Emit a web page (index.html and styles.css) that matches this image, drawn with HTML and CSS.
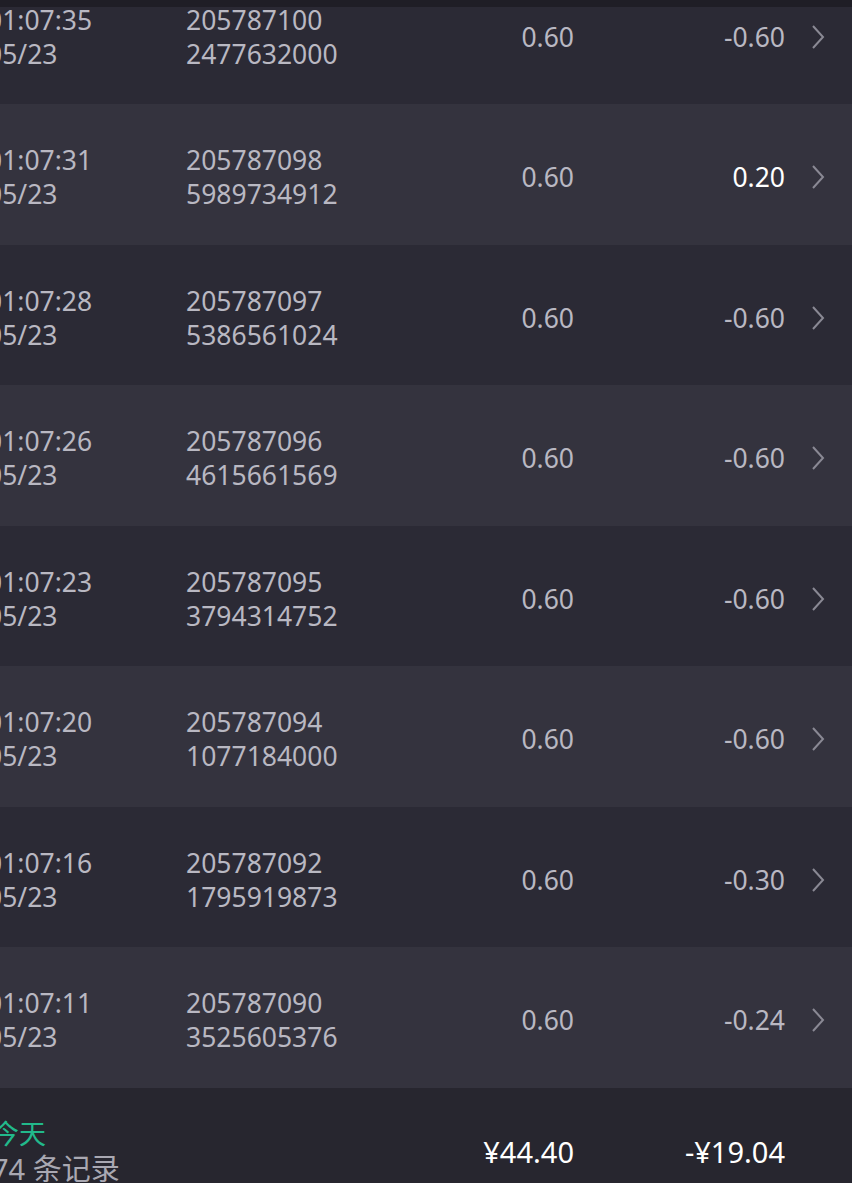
FILE: index.html
```html
<!DOCTYPE html>
<html lang="zh-CN">
<head>
    <meta charset="UTF-8">
    <title>交易记录</title>
    <meta name="viewport" content="width=device-width, initial-scale=1.0">
    <link rel="stylesheet" href="styles.css">
</head>
<body>
    <div class="topbar"></div>

    <div class="list">
        <div class="row">
            <div class="time">01:07:35<br>05/23</div>
            <div class="order">205787100<br>2477632000</div>
            <div class="amount">0.60</div>
            <div class="profit">-0.60</div>
            <div class="arrow"><svg width="14" height="26" viewBox="0 0 14 26"><polyline points="2,2 12,13 2,24" fill="none" stroke="#8a8994" stroke-width="2"/></svg></div>
        </div>
        <div class="row">
            <div class="time">01:07:31<br>05/23</div>
            <div class="order">205787098<br>5989734912</div>
            <div class="amount">0.60</div>
            <div class="profit win">0.20</div>
            <div class="arrow"><svg width="14" height="26" viewBox="0 0 14 26"><polyline points="2,2 12,13 2,24" fill="none" stroke="#8a8994" stroke-width="2"/></svg></div>
        </div>
        <div class="row">
            <div class="time">01:07:28<br>05/23</div>
            <div class="order">205787097<br>5386561024</div>
            <div class="amount">0.60</div>
            <div class="profit">-0.60</div>
            <div class="arrow"><svg width="14" height="26" viewBox="0 0 14 26"><polyline points="2,2 12,13 2,24" fill="none" stroke="#8a8994" stroke-width="2"/></svg></div>
        </div>
        <div class="row">
            <div class="time">01:07:26<br>05/23</div>
            <div class="order">205787096<br>4615661569</div>
            <div class="amount">0.60</div>
            <div class="profit">-0.60</div>
            <div class="arrow"><svg width="14" height="26" viewBox="0 0 14 26"><polyline points="2,2 12,13 2,24" fill="none" stroke="#8a8994" stroke-width="2"/></svg></div>
        </div>
        <div class="row">
            <div class="time">01:07:23<br>05/23</div>
            <div class="order">205787095<br>3794314752</div>
            <div class="amount">0.60</div>
            <div class="profit">-0.60</div>
            <div class="arrow"><svg width="14" height="26" viewBox="0 0 14 26"><polyline points="2,2 12,13 2,24" fill="none" stroke="#8a8994" stroke-width="2"/></svg></div>
        </div>
        <div class="row">
            <div class="time">01:07:20<br>05/23</div>
            <div class="order">205787094<br>1077184000</div>
            <div class="amount">0.60</div>
            <div class="profit">-0.60</div>
            <div class="arrow"><svg width="14" height="26" viewBox="0 0 14 26"><polyline points="2,2 12,13 2,24" fill="none" stroke="#8a8994" stroke-width="2"/></svg></div>
        </div>
        <div class="row">
            <div class="time">01:07:16<br>05/23</div>
            <div class="order">205787092<br>1795919873</div>
            <div class="amount">0.60</div>
            <div class="profit">-0.30</div>
            <div class="arrow"><svg width="14" height="26" viewBox="0 0 14 26"><polyline points="2,2 12,13 2,24" fill="none" stroke="#8a8994" stroke-width="2"/></svg></div>
        </div>
        <div class="row">
            <div class="time">01:07:11<br>05/23</div>
            <div class="order">205787090<br>3525605376</div>
            <div class="amount">0.60</div>
            <div class="profit">-0.24</div>
            <div class="arrow"><svg width="14" height="26" viewBox="0 0 14 26"><polyline points="2,2 12,13 2,24" fill="none" stroke="#8a8994" stroke-width="2"/></svg></div>
        </div>
    </div>

    <div class="summary">
        <div class="day">
            <div class="today">今天</div>
            <div class="count">74 条记录</div>
        </div>
        <div></div>
        <div class="total">¥44.40</div>
        <div class="total">-¥19.04</div>
        <div></div>
    </div>
</body>
</html>
```

FILE: styles.css
```css
* { box-sizing: border-box; }
body {
    margin: 0;
    height: 1183px;
    overflow: hidden;
    background: #27262f;
    font-family: "Noto Sans", "Noto Sans CJK SC", sans-serif;
    color: #b9b8c2;
}
.topbar {
    position: fixed;
    top: 0;
    left: 0;
    right: 0;
    height: 7px;
    background: #1f1e26;
    z-index: 2;
}
.list { margin-top: -36.5px; margin-left: -13px; }
.row, .summary {
    display: grid;
    grid-template-columns: 199px 248px 140px 211px 67px;
    align-items: center;
}
.row {
    height: 140.5px;
    padding-top: 6px;
    font-size: 26.5px;
    line-height: 34px;
    background: #2b2a35;
}
.row:nth-child(even) { background: #34333e; }
.amount, .profit, .total { text-align: right; }
.profit.win { color: #fff; }
.arrow { padding-left: 26px; display: flex; align-items: center; }
.arrow svg { display: block; }

.summary {
    margin-left: -13px;
    padding-top: 28px;
}
.day { padding-left: 5px; line-height: 35px; }
.today { color: #22b98b; font-size: 27px; }
.count { color: #a9a8b2; font-size: 29px; }
.total { color: #fff; font-size: 29px; margin-top: 2px; }
```
